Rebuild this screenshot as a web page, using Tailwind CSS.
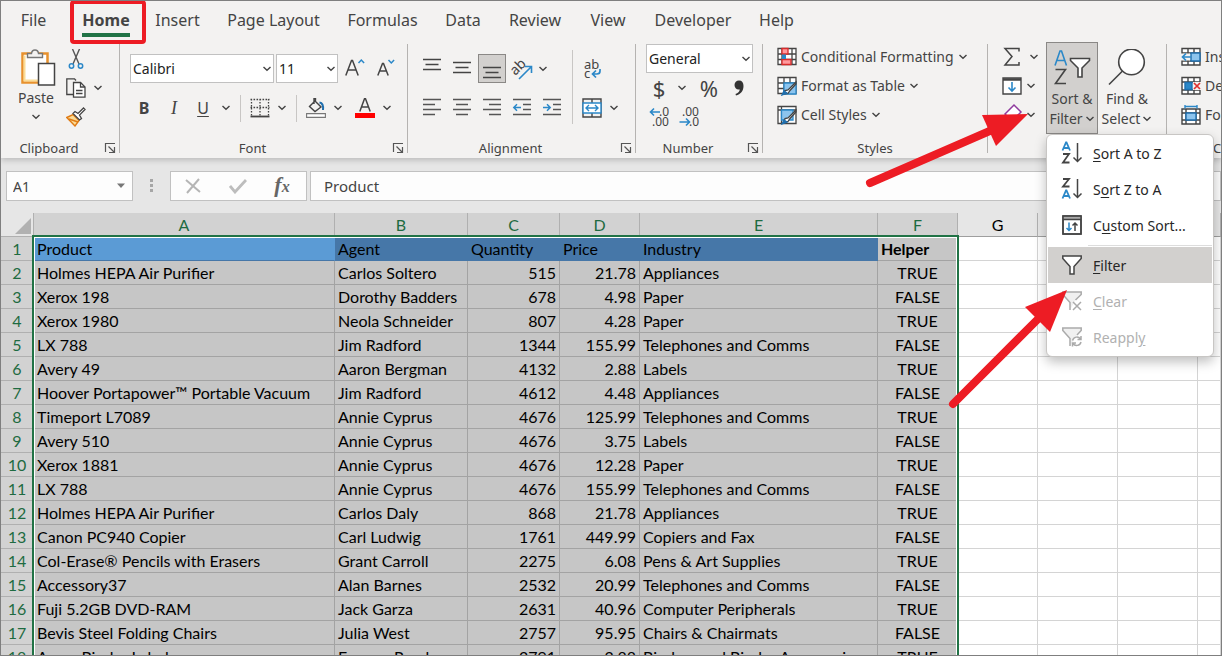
<!DOCTYPE html>
<html lang="en">
  <head>
    <meta charset="utf-8" />
    <title>Spreadsheet</title>
    <script src="https://cdn.jsdelivr.net/npm/@tailwindcss/browser@4"></script>
  </head>
  <body class="h-screen overflow-hidden font-['Noto_Sans',sans-serif] text-[#444444]">
    <!-- Shared icons -->
    <svg class="hidden">
      <symbol id="chev" viewBox="0 0 10 10"><path d="M1.5 3 5 6.300 8.500 3" fill="none" stroke="#444" stroke-width="1.400" /></symbol>
      <symbol id="launch" viewBox="0 0 12 12"><path d="M1.500 10V1.500H11M4.500 4.500 10 10M10.500 5v5.500H5" fill="none" stroke="#555" stroke-width="1.2" /></symbol>
      <symbol id="funnel" viewBox="0 0 20 20"><path d="M.8 1h18.400v2.500L12 11.500V19H8v-7.500L.8 3.500Z" stroke-width="1.500" /></symbol>
    </svg>

    <div class="relative flex h-full flex-col overflow-hidden border border-[#7f7f7f] bg-[#e6e6e6]">
      <!-- Tabs -->
      <nav class="relative z-10 flex h-[41px] shrink-0 bg-[#f3f2f1] pb-[3px] text-base">
        <button class="w-[65px]">File</button>
        <button class="relative ml-1 w-[72px] font-bold">Home
          <span class="absolute top-8 left-3 h-1 w-12 bg-[#217346]"></span>
          <span class="absolute -top-px left-0 h-11 w-[76px] rounded-sm border-4 border-[#ed1c24]"></span>
        </button>
        <button class="w-[71px]">Insert</button>
        <button class="w-[121px]">Page Layout</button>
        <button class="w-[97px]">Formulas</button>
        <button class="w-16">Data</button>
        <button class="w-20">Review</button>
        <button class="w-[66px]">View</button>
        <button class="w-[104px]">Developer</button>
        <button class="w-[63px]">Help</button>
      </nav>

      <!-- Ribbon -->
      <div class="relative flex h-[116px] shrink-0 bg-[#f3f2f1] text-[14px] leading-5 shadow-[0_2px_6px_rgba(0,0,0,0.2)]">
        <!-- Clipboard -->
        <section class="flex w-[118px] shrink-0 flex-col">
          <div class="flex h-[92px] shrink-0 pl-3">
            <button class="flex w-[46px] flex-col items-center pt-1.5">
              <svg class="h-10 w-10 shrink-0" viewBox="-3 0 40 40" fill="none">
                <path d="M3.500 5.500H28.500V34.500H3.500Z" fill="#fff" stroke="#e8912d" stroke-width="2.500" />
                <path d="M5.500 7.500V32.500H26" stroke="#fbdc96" stroke-width="2" />
                <path d="M8.500 9.500V5.500H12.500C13 .8 19 .8 19.500 5.500H23.500V9.500Z" fill="#f3f2f1" stroke="#777" stroke-width="1.400" />
                <path d="M19.500 15.500H35.500V37H19.500Z" fill="#fff" stroke="#444" stroke-width="1.500" />
              </svg>
              <span>Paste</span>
              <svg class="mt-1 size-2.5 shrink-0"><use href="#chev" /></svg>
            </button>
            <div class="flex flex-col pt-0.5 pl-[3px]">
              <button aria-label="Cut" class="flex h-[29px] w-7 items-center justify-center">
                <svg class="h-5 w-4" viewBox="0 0 16 20" fill="none"><path d="M4.500 0 11 15M11.500 0 5 15" stroke="#555" stroke-width="1.400" /><circle cx="3.500" cy="17" r="2.200" stroke="#2b88c8" stroke-width="1.500" /><circle cx="12.500" cy="17" r="2.200" stroke="#2b88c8" stroke-width="1.500" /></svg>
              </button>
              <div class="flex items-center">
                <button aria-label="Copy" class="flex h-[29px] w-7 items-center justify-center">
                  <svg class="size-5" viewBox="0 0 20 20" fill="none" stroke="#444" stroke-width="1.300"><path d="M7 16.500H.8V.8H8.500L10 2.500" /><path d="M7.500 4.500H14.500L19 9V19.200H7.500Z" fill="#fff" /><path d="M14.500 4.500V9H19M10 12.500h6.500M10 15.500h6.500" /></svg>
                </button>
                <button aria-label="Copy options" class="flex w-4 justify-center"><svg class="size-2.5"><use href="#chev" /></svg></button>
              </div>
              <button aria-label="Format Painter" class="flex h-[29px] w-7 items-center justify-center">
                <svg class="size-5" viewBox="0 0 20 20" fill="none"><path d="M.8 10.500 7 7.500 13 13.500 9 19 .8 10.500Z" fill="#fbdc96" stroke="#e07b14" stroke-width="1.400" /><path d="M3 12l9 3" stroke="#e07b14" stroke-width="1.500" /><path d="m7 6.500 2-2 3 2L17.500 1 19 2.500 13.500 8l2 3.500-2 1.500Z" fill="#fff" stroke="#444" stroke-width="1.300" /></svg>
              </button>
            </div>
          </div>
          <div class="flex h-7 shrink-0 items-center text-[13px]"><span class="w-24 text-center">Clipboard</span><button aria-label="Clipboard settings" class="ml-[7px]"><svg class="size-3"><use href="#launch" /></svg></button></div>
        </section>
        <div class="mt-0.5 mb-[5px] w-px shrink-0 bg-[#b5b3b1]"></div>

        <!-- Font -->
        <section class="flex w-[287px] shrink-0 flex-col">
          <div class="flex h-[92px] shrink-0 flex-col pt-3 pl-2.5">
            <div class="flex items-center">
              <div class="relative">
                <select aria-label="Font" class="block h-[29px] w-36 appearance-none border border-[#c1c1c1] bg-white px-0.5 text-[14px] text-[#222222]"><option>Calibri</option></select>
                <svg class="pointer-events-none absolute top-2.5 right-0.5 size-2.5"><use href="#chev" /></svg>
              </div>
              <div class="relative ml-0.5">
                <select aria-label="Font size" class="block h-[29px] w-[62px] appearance-none border border-[#c1c1c1] bg-white px-0.5 text-[14px] text-[#222222]"><option>11</option></select>
                <svg class="pointer-events-none absolute top-2.5 right-0.5 size-2.5"><use href="#chev" /></svg>
              </div>
              <button aria-label="Increase font size" class="ml-[7px] w-5"><svg class="mb-1 size-5" viewBox="0 0 20 20" fill="none" stroke-width="1.500"><path d="M.8 18.500 6.500 3.500h1L13.200 18.500M3 13h8" stroke="#444" /><path d="m13.500 6 2.800-3 2.800 3" stroke="#2b88c8" /></svg></button>
              <button aria-label="Decrease font size" class="ml-3 w-5"><svg class="mb-1 size-5" viewBox="0 0 20 20" fill="none" stroke-width="1.500"><path d="M.8 18.500 5.500 6.500h1L11.200 18.500M2.500 14h7" stroke="#444" /><path d="m11.500 3 2.800 3 2.800-3" stroke="#2b88c8" /></svg></button>
            </div>
            <div class="mt-[11px] flex h-7 items-center text-base">
              <button class="w-7 font-bold">B</button>
              <button class="ml-0.5 w-7 font-['Liberation_Serif',serif] text-lg italic">I</button>
              <button class="ml-px w-7 underline underline-offset-2">U</button>
              <button aria-label="Underline options" class="flex w-[18px] justify-center"><svg class="size-2.5"><use href="#chev" /></svg></button>
              <span class="mx-[5px] h-[27px] w-px bg-[#c8c6c4]"></span>
              <button aria-label="Borders" class="flex w-[27px] justify-center"><svg class="size-5" viewBox="0 0 20 20" stroke="#444" fill="none"><path d="M.5 1.500h19M.5 9.500h19M1.500 1v17M10 1v17M18.500 1v17" stroke-width="1.300" stroke-dasharray="1.600 1.400" /><path d="M.5 18.500h19" stroke-width="1.800" /></svg></button>
              <button aria-label="Border options" class="flex w-[18px] justify-center"><svg class="size-2.5"><use href="#chev" /></svg></button>
              <span class="mx-[5px] h-[27px] w-px bg-[#c8c6c4]"></span>
              <button aria-label="Fill color" class="flex w-[27px] justify-center"><svg class="size-5" viewBox="0 0 20 20" fill="none"><path d="M8.500 2.500 15 9 9 13.500 3.500 8.500 9.500 2.500V.8H8V6" stroke="#444" stroke-width="1.400" /><path d="M13.500 4.500c3 .5 4 3 3.500 7.500" stroke="#1f6fae" stroke-width="2" /><path d="M.6 15.600h18.800v3.800H.6Z" fill="#fff" stroke="#777" stroke-width="1.100" /></svg></button>
              <button aria-label="Fill options" class="flex w-[18px] justify-center"><svg class="size-2.5"><use href="#chev" /></svg></button>
              <button aria-label="Font color" class="ml-1 flex w-[27px] justify-center"><svg class="size-5" viewBox="0 0 20 20" fill="none"><path d="M4.800 13.500 9.500.8h1L15.200 13.500M6.500 9h7" stroke="#444" stroke-width="1.500" /><path d="M0 15h20v5H0Z" fill="#f00" /></svg></button>
              <button aria-label="Font color options" class="flex w-[18px] justify-center"><svg class="size-2.5"><use href="#chev" /></svg></button>
            </div>
          </div>
          <div class="flex h-7 shrink-0 items-center text-[13px]"><span class="w-[265px] text-center">Font</span><button aria-label="Font settings" class="ml-[7px]"><svg class="size-3"><use href="#launch" /></svg></button></div>
        </section>
        <div class="mt-0.5 mb-[5px] w-px shrink-0 bg-[#b5b3b1]"></div>

        <!-- Alignment -->
        <section class="flex w-[227px] shrink-0 flex-col">
          <div class="flex h-[92px] shrink-0 pt-3 pl-2.5">
            <div class="flex w-[150px] flex-col gap-[11px]">
              <div class="flex gap-0.5">
                <button aria-label="Top align" class="flex h-[29px] w-7 items-center justify-center"><svg class="size-5 overflow-visible" viewBox="0 0 20 20" stroke="#444" stroke-width="1.500"><path d="M1 .500h18M3.500 5.500h13M1 10.500h18" /></svg></button>
                <button aria-label="Middle align" class="flex h-[29px] w-7 items-center justify-center"><svg class="size-5" viewBox="0 0 20 20" stroke="#444" stroke-width="1.500"><path d="M1 3.500h18M3.500 8.500h13M1 13.500h18" /></svg></button>
                <button aria-label="Bottom align" class="flex h-[29px] w-7 items-center justify-center border border-[#8a8886] bg-[#d2d0ce]"><svg class="size-5 shrink-0" viewBox="0 0 20 20" stroke="#444" stroke-width="1.500"><path d="M1 8.500h18M3.500 13.500h13M1 18.500h18" /></svg></button>
                <button aria-label="Orientation" class="flex h-[29px] w-7 items-center justify-center"><svg class="size-6 overflow-visible" viewBox="0 0 24 24"><text x="2" y="17" font-size="14" fill="#444" transform="rotate(-45 6 14)">ab</text><path d="M9 22 21 10M15 9.500h6.500V16" fill="none" stroke="#2b88c8" stroke-width="1.600" /></svg></button>
                <button aria-label="Orientation options" class="flex w-2.5 items-center"><svg class="size-2.5"><use href="#chev" /></svg></button>
              </div>
              <div class="flex gap-0.5">
                <button aria-label="Align left" class="flex h-7 w-7 items-center justify-center"><svg class="size-5" viewBox="0 0 20 20" stroke="#555" stroke-width="1.500"><path d="M1 1.500h18M1 6.500h12M1 11.500h18M1 16.500h12" /></svg></button>
                <button aria-label="Center" class="flex h-7 w-7 items-center justify-center"><svg class="size-5" viewBox="0 0 20 20" stroke="#555" stroke-width="1.500"><path d="M1 1.500h18M4 6.500h12M1 11.500h18M4 16.500h12" /></svg></button>
                <button aria-label="Align right" class="flex h-7 w-7 items-center justify-center"><svg class="size-5" viewBox="0 0 20 20" stroke="#555" stroke-width="1.500"><path d="M1 1.500h18M7 6.500h12M1 11.500h18M7 16.500h12" /></svg></button>
                <button aria-label="Decrease indent" class="flex h-7 w-7 items-center justify-center"><svg class="size-5" viewBox="0 0 20 20" fill="none" stroke="#555" stroke-width="1.500"><path d="M1 1.500h18M11 6.500h8M11 11.500h8M1 16.500h18" /><path d="M9 9.500H2M5 6.300 1.800 9.500 5 12.700" stroke="#2b88c8" /></svg></button>
                <button aria-label="Increase indent" class="flex h-7 w-7 items-center justify-center"><svg class="size-5" viewBox="0 0 20 20" fill="none" stroke="#555" stroke-width="1.500"><path d="M1 1.500h18M11 6.500h8M11 11.500h8M1 16.500h18" /><path d="M1 9.500h7M5 6.300 8.200 9.500 5 12.700" stroke="#2b88c8" /></svg></button>
              </div>
            </div>
            <span class="-mt-1 mr-[5px] ml-1 h-[74px] w-px bg-[#c8c6c4]"></span>
            <div class="flex flex-col gap-[11px]">
              <button aria-label="Wrap text" class="flex h-[29px] w-7 items-center justify-center"><svg class="h-6 w-5 overflow-visible" viewBox="0 0 20 24"><text x="2" y="12" font-size="13" fill="#444">ab</text><text x="2" y="21" font-size="13" fill="#444">c</text><path d="M18 12v2q0 3-3 3h-4M14 13.500 10.500 17 14 20.500" fill="none" stroke="#2b88c8" stroke-width="1.700" /></svg></button>
              <div class="flex gap-[3px]">
                <button aria-label="Merge and center" class="flex h-7 w-7 items-center justify-center"><svg class="size-5" viewBox="0 0 20 20" fill="none" stroke="#444" stroke-width="1.400"><path d="M1 1h18v18H1ZM10 1v4M10 15v4" /><path d="M1 5h18v10H1Z" fill="#fff" stroke="#2b88c8" /><path d="M4 10h12M7 7l-3 3 3 3M13 7l3 3-3 3" stroke="#2b88c8" /></svg></button>
                <button aria-label="Merge options" class="flex w-2.5 items-center"><svg class="size-2.5"><use href="#chev" /></svg></button>
              </div>
            </div>
          </div>
          <div class="flex h-7 shrink-0 items-center text-[13px]"><span class="w-[205px] text-center">Alignment</span><button aria-label="Alignment settings" class="ml-[7px]"><svg class="size-3"><use href="#launch" /></svg></button></div>
        </section>
        <div class="mt-0.5 mb-[5px] w-px shrink-0 bg-[#b5b3b1]"></div>

        <!-- Number -->
        <section class="flex w-[126px] shrink-0 flex-col">
          <div class="flex h-[92px] shrink-0 flex-col pt-0.5 pl-2.5">
            <div class="relative w-[107px]">
              <select aria-label="Number format" class="block h-[29px] w-full appearance-none border border-[#c1c1c1] bg-white px-0.5 text-[14px] text-[#222222]"><option>General</option></select>
              <svg class="pointer-events-none absolute top-2.5 right-0.5 size-2.5"><use href="#chev" /></svg>
            </div>
            <div class="flex h-[30px] items-center text-[22px]">
              <button class="w-[26px]">$</button>
              <button aria-label="Currency options" class="flex w-5 justify-center"><svg class="size-2.5"><use href="#chev" /></svg></button>
              <button class="w-[34px]">%</button>
              <button aria-label="Comma style" class="flex w-[26px] justify-center"><svg class="h-4 w-2.5" viewBox="0 0 10 16"><path d="M5 .5C8 .5 9.500 2.500 9.500 6c0 5-3 8.500-7.500 9.500L1.500 14C4 13 5.500 11.500 5.800 9.400 3 10.300.5 8 .5 5 .5 2.500 2.500.5 5 .5Z" fill="#333" /></svg></button>
            </div>
            <div class="flex gap-0.5">
              <button aria-label="Increase decimal" class="flex h-7 w-7 items-center justify-center"><svg class="h-6 w-5 overflow-visible" viewBox="0 0 20 24"><text x="9" y="11" font-size="12" fill="#444">.0</text><text x="2" y="21" font-size="12" fill="#444">.00</text><path d="M10 7H.5M4 3.500 .5 7 4 10.500" fill="none" stroke="#2b88c8" stroke-width="1.600" /></svg></button>
              <button aria-label="Decrease decimal" class="flex h-7 w-7 items-center justify-center"><svg class="h-6 w-5 overflow-visible" viewBox="0 0 20 24"><text x="2" y="11" font-size="12" fill="#444">.00</text><text x="9" y="21" font-size="12" fill="#444">.0</text><path d="M-.5 17H9M6 13.500 9.500 17 6 20.500" fill="none" stroke="#2b88c8" stroke-width="1.600" /></svg></button>
            </div>
          </div>
          <div class="flex h-7 shrink-0 items-center text-[13px]"><span class="w-[104px] text-center">Number</span><button aria-label="Number settings" class="ml-[7px]"><svg class="size-3"><use href="#launch" /></svg></button></div>
        </section>
        <div class="mt-0.5 mb-[5px] w-px shrink-0 bg-[#b5b3b1]"></div>

        <!-- Styles -->
        <section class="flex w-56 shrink-0 flex-col">
          <div class="flex h-[92px] shrink-0 flex-col items-start pl-3.5">
            <button class="flex h-[29px] items-center gap-1"><svg class="size-5" viewBox="0 0 20 20" fill="none" stroke="#444" stroke-width="1.300"><path d="M1 1.500h18v16H1ZM1 7h18M1 12.500h18M5 1.500v16M15 1.500v16" fill="#fff" /><path d="M5 1.500h6V7H5ZM5 12.500h9v5H5Z" fill="#ff9a9e" stroke="#d92c2c" /><path d="M5 7.500h4v4.500H5Z" fill="#2b88c8" stroke="none" /></svg>Conditional Formatting<svg class="size-2.5"><use href="#chev" /></svg></button>
            <button class="flex h-[29px] items-center gap-1"><svg class="size-5" viewBox="0 0 20 20" fill="none" stroke="#444" stroke-width="1.300"><path d="M1 1.500h18v16H1ZM1 7h18M1 12.500h18M7 1.500v16M13 1.500v16" fill="#fff" /><path d="M7 7h12v11H7Z" fill="#8cc4ee" stroke="#2b88c8" /><path d="m19 6-8 8-3 .500-1 3.500 4-.500 2-3 6-6.500Z" fill="#fff" /><path d="m5 19 2-4 3 2Z" fill="#1f6fae" stroke="#1f6fae" /></svg>Format as Table<svg class="size-2.5"><use href="#chev" /></svg></button>
            <button class="flex h-[29px] items-center gap-1"><svg class="size-5" viewBox="0 0 20 20" fill="none" stroke="#444" stroke-width="1.300"><path d="M1 1.500h18v17H1ZM1 5h18M4.500 1.500v17" fill="#fff" /><path d="M4.500 5H16v10H4.500Z" fill="#8cc4ee" stroke="#2b88c8" /><path d="m19 5-8 8-3 .500-1 3.500 4-.500 2-3 6-6.500Z" fill="#fff" /><path d="m5 19 2-4 3 2Z" fill="#1f6fae" stroke="#1f6fae" /></svg>Cell Styles<svg class="size-2.5"><use href="#chev" /></svg></button>
          </div>
          <div class="shrink-0 text-center text-[13px] leading-7">Styles</div>
        </section>
        <div class="mt-0.5 mb-[5px] w-px shrink-0 bg-[#b5b3b1]"></div>

        <!-- Editing -->
        <section class="flex w-[178px] shrink-0">
          <div class="flex w-[58px] flex-col pl-3.5">
            <div class="flex h-[29px] items-center"><button aria-label="AutoSum"><svg class="size-5" viewBox="0 0 20 20" fill="none"><path d="M17 4.500V1.500H3L10 9.500 3 18H17v-3" stroke="#444" stroke-width="1.500" /></svg></button><button aria-label="AutoSum options" class="ml-[7px]"><svg class="size-2.5"><use href="#chev" /></svg></button></div>
            <div class="flex h-[29px] items-center"><button aria-label="Fill"><svg class="size-5" viewBox="0 0 20 20" fill="none" stroke="#444" stroke-width="1.400"><path d="M1 2h18v16H1Z" fill="#fff" /><path d="M1 3.500h18" stroke-width="2.500" /><path d="M10 6v9M6.500 11.500 10 15l3.500-3.500" stroke="#2b88c8" stroke-width="1.600" /></svg></button><button aria-label="Fill menu" class="ml-1"><svg class="size-2.5"><use href="#chev" /></svg></button></div>
            <div class="flex h-[29px] items-center"><button aria-label="Clear cells"><svg class="size-5 overflow-visible" viewBox="0 0 20 20" fill="none" stroke="#8e3a9d" stroke-width="1.500"><path d="M3 9 12 0l7 7-9 9Z" fill="#fff" /></svg></button><button aria-label="Clear menu" class="ml-1"><svg class="size-2.5"><use href="#chev" /></svg></button></div>
          </div>
          <button class="flex h-[92px] w-[52px] flex-col items-center border border-[#8a8886] bg-[#d2d0ce] pt-1.5">
            <svg class="h-10 w-[38px] shrink-0" viewBox="0 0 38 40" fill="none" stroke-width="1.600"><path d="M2 16.500 7 2h1.500L13.500 16.500M3.800 11.500h8" stroke="#2b88c8" /><path d="M2.500 20.500h10L2.500 34.500h10.500" stroke="#444" /><path d="M17.500 9.500h19v2L29 19v9h-4v-9l-7.500-7.500Z" fill="#fff" stroke="#444" /></svg>
            <span class="whitespace-nowrap">Sort &amp;</span>
            <span class="flex items-center gap-0.5">Filter <svg class="size-2.5"><use href="#chev" /></svg></span>
          </button>
          <button class="flex h-[92px] w-[58px] flex-col items-center pt-[7px]">
            <svg class="h-10 w-[38px] shrink-0" viewBox="0 0 38 40" fill="none" stroke="#444" stroke-width="1.600"><circle cx="23.500" cy="13" r="12.800" fill="#fff" /><path d="M14.500 22 1 35.500" /></svg>
            <span class="whitespace-nowrap">Find &amp;</span>
            <span class="flex items-center gap-0.5">Select <svg class="size-2.5"><use href="#chev" /></svg></span>
          </button>
        </section>
        <div class="mt-0.5 mb-[5px] w-px shrink-0 bg-[#b5b3b1]"></div>

        <!-- Cells -->
        <section class="flex min-w-0 flex-1 flex-col overflow-hidden">
          <div class="flex h-[92px] shrink-0 flex-col items-start pl-3.5">
            <button class="flex h-[29px] items-center gap-1"><svg class="size-5 shrink-0" viewBox="0 0 20 20" fill="none" stroke="#444" stroke-width="1.400"><path d="M1 1.500h18v16.500H1ZM1 6h18M1 14h18M7 1.500v16.500M13 1.500v16.500" fill="#fff" /><path d="M10 6h9v8h-9Z" fill="#8cc4ee" stroke="#1f6fae" /><path d="M0 6.500h9v7H0Z" fill="#f3f2f1" stroke="none" /><path d="M10 10H1.500M5 6.500 1.500 10 5 13.500" stroke="#2b88c8" stroke-width="1.700" /></svg>Insert</button>
            <button class="flex h-[29px] items-center gap-1"><svg class="size-5 shrink-0" viewBox="0 0 20 20" fill="none" stroke="#444" stroke-width="1.400"><path d="M1 1.500h18v16.500H1ZM1 6h18M1 14h18M7 1.500v16.500M13 1.500v16.500" fill="#fff" /><path d="M4 6.500h7v7H4Z" fill="#2b88c8" stroke="#1f6fae" /><path d="M12 6h8v8h-8Z" fill="#f3f2f1" stroke="none" /><path d="m13 7 6 6M19 7l-6 6" stroke="#e03030" stroke-width="1.700" /></svg>Delete</button>
            <button class="flex h-[29px] items-center gap-1"><svg class="size-5 shrink-0" viewBox="0 0 20 20" fill="none" stroke="#444" stroke-width="1.400"><path d="M1 4h18v15H1ZM1 8h18M1 15h18M5 4v15M15 4v15" fill="#fff" /><path d="M5 8h10v7H5Z" fill="#8cc4ee" stroke="#1f6fae" /><path d="M4 1.500h12M4 0v3.500M16 0v3.500" stroke="#2b88c8" /></svg>Format</button>
          </div>
          <div class="shrink-0 pl-[46px] text-[13px] leading-7">Cells</div>
        </section>
      </div>

      <!-- Formula bar -->
      <div class="flex h-[55px] shrink-0 items-start pt-[13px] pl-[5px]">
        <div class="relative w-[127px]">
          <input aria-label="Name box" value="A1" class="block h-[30px] w-full border border-[#c1c1c1] bg-[#fdfdfd] px-1.5 text-[14px]" />
          <svg class="absolute top-3 right-2 h-1.5 w-2" viewBox="0 0 8 6"><path d="M0 .5h8L4 5Z" fill="#777" /></svg>
        </div>
        <svg class="ml-[17px] h-[30px] w-1" viewBox="0 0 4 30"><path d="M0 8h3v3H0ZM0 13h3v3H0ZM0 18h3v3H0Z" fill="#a6a6a6" /></svg>
        <div class="ml-4 flex h-[30px] w-[137px] items-center border border-[#c1c1c1] bg-[#fdfdfd]">
          <button aria-label="Cancel" class="flex w-11 justify-center"><svg class="size-4" viewBox="0 0 16 16"><path d="m1 2 14 12M14 1 2 15" stroke="#b5b5b5" stroke-width="2" /></svg></button>
          <button aria-label="Enter" class="flex w-[45px] justify-center"><svg class="h-4 w-[18px]" viewBox="0 0 18 16"><path d="m1 8 5 6L17 2" fill="none" stroke="#bdbdbd" stroke-width="2.800" /></svg></button>
          <button aria-label="Insert function" class="w-11 pb-1 font-['Liberation_Serif',serif] text-[22px] font-bold text-[#666666] italic">f<span class="text-base">x</span></button>
        </div>
        <input aria-label="Formula" value="Product" class="ml-[3px] h-[30px] min-w-0 flex-1 border border-[#c1c1c1] bg-[#fdfdfd] px-[13px] text-[15px]" />
      </div>

      <!-- Sheet -->
      <div class="relative min-h-0 flex-1 overflow-hidden bg-white font-['Lato',sans-serif] text-[16px] text-black">
        <table class="w-full table-fixed border-separate border-spacing-0 whitespace-nowrap">
          <colgroup>
            <col class="w-[33px]" /><col class="w-[301px]" /><col class="w-[133px]" /><col class="w-[92px]" /><col class="w-20" /><col class="w-[238px]" /><col class="w-20" /><col class="w-20" /><col class="w-20" /><col class="w-20" /><col />
          </colgroup>
          <thead>
            <tr id="letters" class="h-6 leading-[23px]"></tr>
          </thead>
          <tbody id="rows"></tbody>
        </table>
        <!-- Selection outline -->
        <div class="pointer-events-none absolute top-[22px] -bottom-2 left-[31px] w-[927px] border-2 border-[#217346]">
          <div class="h-full border border-white"></div>
        </div>
      </div>

      <!-- Sort & Filter menu -->
      <div role="menu" class="absolute top-[133px] left-[1045px] w-[168px] rounded-md border border-[#c8c6c4] bg-white px-px pb-px text-[14px] text-[#262626] shadow-[0_5px_12px_rgba(0,0,0,0.25)]">
        <button role="menuitem" class="flex h-9 w-full items-center gap-2.5 pl-[13px]"><svg class="h-6 w-[22px]" viewBox="0 0 22 24" fill="none" stroke-width="1.800"><path d="M1.500 9.500 5 1.500h.5L9 9.500M2.700 7h5.200" stroke="#2b88c8" /><path d="M2 13h6L2 21.500h6.500" stroke="#444" /><path d="M16.500 2v18.500M12.500 16.500l4 4 4-4" stroke="#444" stroke-width="1.500" /></svg><span><u class="underline-offset-2">S</u>ort A to Z</span></button>
        <button role="menuitem" class="flex h-9 w-full items-center gap-2.5 pl-[13px]"><svg class="h-6 w-[22px]" viewBox="0 0 22 24" fill="none" stroke-width="1.800"><path d="M2 2h6L2 9.500h6.500" stroke="#444" /><path d="M1.500 21.500 5 13.500h.5L9 21.500M2.700 19h5.200" stroke="#2b88c8" /><path d="M16.500 2v18.500M12.500 16.500l4 4 4-4" stroke="#444" stroke-width="1.500" /></svg><span>S<u class="underline-offset-2">o</u>rt Z to A</span></button>
        <button role="menuitem" class="flex h-9 w-full items-center gap-2.5 pl-[13px]"><svg class="h-5 w-[22px]" viewBox="0 0 22 20" fill="none" stroke="#444" stroke-width="1.500"><path d="M2 1h18v18H2Z" fill="#fff" /><path d="M2 3h18" stroke="#aaa" stroke-width="2.500" /><path d="M2 1h18v18H2ZM2 4.500h18" /><path d="M8 7.500v8M5.500 13 8 15.500l2.500-2.500" stroke="#2b88c8" /><path d="M14 16V8M11.500 10.500 14 8l2.500 2.500" /></svg><span>C<u class="underline-offset-2">u</u>stom Sort...</span></button>
        <hr class="mt-0.5 mb-px ml-10 border-[#dddddd]" />
        <button role="menuitem" class="flex h-9 w-full items-center gap-2.5 bg-[#d2d0ce] pl-[13px]"><svg class="h-5 w-[22px] fill-white stroke-[#444]"><use href="#funnel" /></svg><span><u class="underline-offset-2">F</u>ilter</span></button>
        <button role="menuitem" disabled class="flex h-9 w-full items-center gap-2.5 pl-[13px] text-[#b1b1b1]"><svg class="h-5 w-[22px]" viewBox="0 0 22 20" fill="none" stroke="#aaa" stroke-width="1.500"><path d="M9 19v-7.500L1.800 3.500V1h18.400v2.500L14.500 9" fill="#f0f0f0" /><path d="m12 11 8 8M20 11l-8 8" /></svg><span><u class="underline-offset-2">C</u>lear</span></button>
        <button role="menuitem" disabled class="flex h-9 w-full items-center gap-2.5 pl-[13px] text-[#b1b1b1]"><svg class="h-5 w-[22px]" viewBox="0 0 22 20" fill="none" stroke="#aaa" stroke-width="1.500"><path d="M9 19v-7.500L1.800 3.500V1h18.400v2.500L16 8" fill="#f0f0f0" /><path d="M11.500 13.500c1-4 6-4.500 8-1.500M20 9v3.500h-3.500M20 15c-1 4-6 4.500-8 1.500M11.500 19.500V16H15" /></svg><span>Reappl<u class="underline-offset-2">y</u></span></button>
      </div>

      <!-- Arrows -->
      <svg class="pointer-events-none absolute -top-px -left-px h-[656px] w-[1222px]" viewBox="0 0 1222 656" fill="#ed1c24" stroke="#ed1c24" stroke-linecap="round">
        <path d="M870 183 992 130" stroke-width="8" /><path d="m1028 114-46 1 14 31Z" stroke="none" />
        <path d="m953 404 89-89" stroke-width="8" /><path d="m1067 290-42 17 25 25Z" stroke="none" />
      </svg>
    </div>

    <script>
      const letters = ["A", "B", "C", "D", "E", "F", "G", "H", "I", "J"];
      const data = [
        ["Product", "Agent", "Quantity", "Price", "Industry", "Helper"],
        ["Holmes HEPA Air Purifier", "Carlos Soltero", "515", "21.78", "Appliances", "TRUE"],
        ["Xerox 198", "Dorothy Badders", "678", "4.98", "Paper", "FALSE"],
        ["Xerox 1980", "Neola Schneider", "807", "4.28", "Paper", "TRUE"],
        ["LX 788", "Jim Radford", "1344", "155.99", "Telephones and Comms", "FALSE"],
        ["Avery 49", "Aaron Bergman", "4132", "2.88", "Labels", "TRUE"],
        ["Hoover Portapower™ Portable Vacuum", "Jim Radford", "4612", "4.48", "Appliances", "FALSE"],
        ["Timeport L7089", "Annie Cyprus", "4676", "125.99", "Telephones and Comms", "TRUE"],
        ["Avery 510", "Annie Cyprus", "4676", "3.75", "Labels", "FALSE"],
        ["Xerox 1881", "Annie Cyprus", "4676", "12.28", "Paper", "TRUE"],
        ["LX 788", "Annie Cyprus", "4676", "155.99", "Telephones and Comms", "FALSE"],
        ["Holmes HEPA Air Purifier", "Carlos Daly", "868", "21.78", "Appliances", "TRUE"],
        ["Canon PC940 Copier", "Carl Ludwig", "1761", "449.99", "Copiers and Fax", "FALSE"],
        ["Col-Erase® Pencils with Erasers", "Grant Carroll", "2275", "6.08", "Pens & Art Supplies", "TRUE"],
        ["Accessory37", "Alan Barnes", "2532", "20.99", "Telephones and Comms", "FALSE"],
        ["Fuji 5.2GB DVD-RAM", "Jack Garza", "2631", "40.96", "Computer Peripherals", "TRUE"],
        ["Bevis Steel Folding Chairs", "Julia West", "2757", "95.95", "Chairs & Chairmats", "FALSE"],
        ["Avery Binder Labels", "Eugene Reed", "2791", "2.88", "Binders and Binder Accessories", "TRUE"],
      ];

      // Column letters
      const head = document.getElementById("letters");
      const corner = document.createElement("th");
      corner.className = "border-r border-b border-[#b0b0b0] bg-[#e6e6e6] p-0";
      corner.innerHTML = '<svg class="mt-0.5 ml-3.5 h-4 w-4" viewBox="0 0 16 16"><path d="M16 0v16H0Z" fill="#b1b1b1" /></svg>';
      head.appendChild(corner);
      letters.forEach((letter, i) => {
        const th = document.createElement("th");
        th.textContent = letter;
        th.className = i < 6
          ? "border-r border-b border-[#b0b0b0] bg-[#d2d2d2] p-0 font-normal text-[#1e6b41]"
          : "border-r border-b border-r-[#b0b0b0] border-b-[#9e9e9e] bg-[#e6e6e6] p-0 font-normal";
        head.appendChild(th);
      });

      // Cells
      const body = document.getElementById("rows");
      data.forEach((row, r) => {
        const tr = document.createElement("tr");
        tr.className = "h-6 leading-[23px]";
        const num = document.createElement("th");
        num.textContent = r + 1;
        num.className = "border-r border-b border-[#b0b0b0] bg-[#d2d2d2] p-0 text-center font-normal text-[#1e6b41]";
        tr.appendChild(num);
        letters.forEach((letter, c) => {
          const td = document.createElement("td");
          td.textContent = row[c] || "";
          if (c > 5) {
            td.className = "border-r border-b border-[#d4d4d4] p-0";
          } else if (r === 0 && c === 0) {
            td.className = "border-r border-b border-r-[#5b9bd5] border-b-[#4677a8] bg-[#5b9bd5] px-[3px] py-0";
          } else if (r === 0 && c < 5) {
            td.className = "border-r border-b border-[#4677a8] bg-[#4677a8] px-[3px] py-0";
          } else if (r === 0) {
            td.className = "border-r border-b border-[#a3a3a3] bg-[#c6c6c6] px-[3px] py-0 font-bold";
          } else if (c === 2 || c === 3) {
            td.className = "border-r border-b border-[#a3a3a3] bg-[#c6c6c6] px-[3px] py-0 text-right";
          } else if (c === 5) {
            td.className = "border-r border-b border-[#a3a3a3] bg-[#c6c6c6] p-0 text-center";
          } else {
            td.className = "border-r border-b border-[#a3a3a3] bg-[#c6c6c6] px-[3px] py-0";
          }
          tr.appendChild(td);
        });
        body.appendChild(tr);
      });
    </script>
  </body>
</html>
